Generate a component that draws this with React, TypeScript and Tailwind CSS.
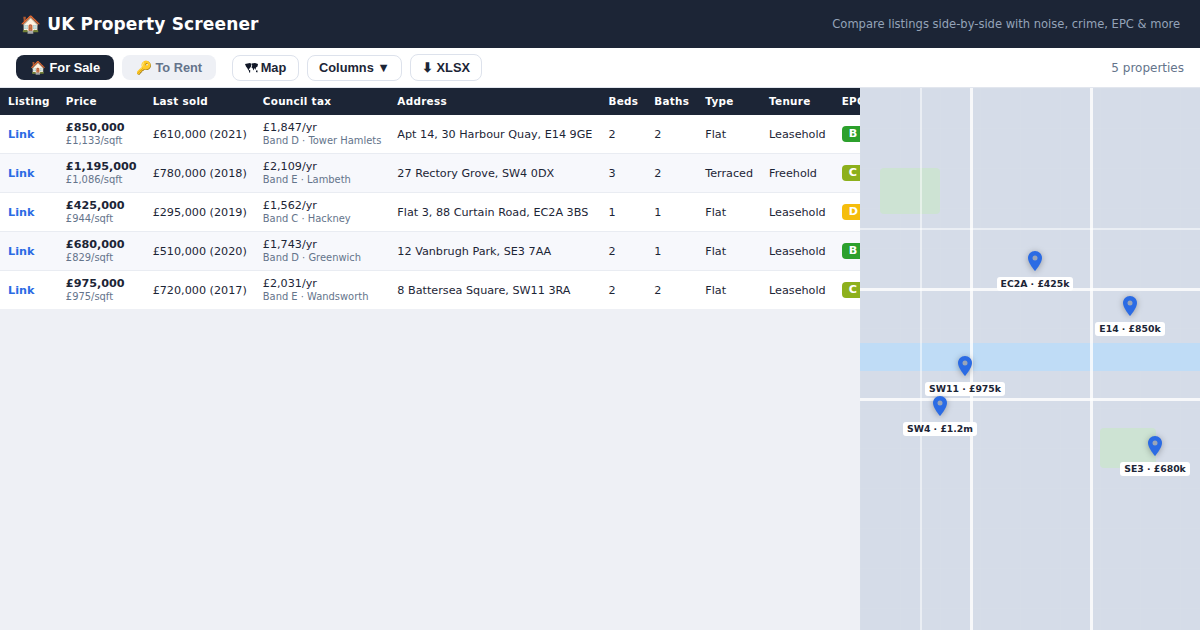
import type { ReactNode } from 'react';

const ROWS = [
  { price: '£850,000', sqft: '£1,133/sqft', sold: '£610,000 (2021)', tax: '£1,847/yr', band: 'Band D · Tower Hamlets', address: 'Apt 14, 30 Harbour Quay, E14 9GE', beds: 2, baths: 2, type: 'Flat', tenure: 'Leasehold', epc: 'B' },
  { price: '£1,195,000', sqft: '£1,086/sqft', sold: '£780,000 (2018)', tax: '£2,109/yr', band: 'Band E · Lambeth', address: '27 Rectory Grove, SW4 0DX', beds: 3, baths: 2, type: 'Terraced', tenure: 'Freehold', epc: 'C' },
  { price: '£425,000', sqft: '£944/sqft', sold: '£295,000 (2019)', tax: '£1,562/yr', band: 'Band C · Hackney', address: 'Flat 3, 88 Curtain Road, EC2A 3BS', beds: 1, baths: 1, type: 'Flat', tenure: 'Leasehold', epc: 'D' },
  { price: '£680,000', sqft: '£829/sqft', sold: '£510,000 (2020)', tax: '£1,743/yr', band: 'Band D · Greenwich', address: '12 Vanbrugh Park, SE3 7AA', beds: 2, baths: 1, type: 'Flat', tenure: 'Leasehold', epc: 'B' },
  { price: '£975,000', sqft: '£975/sqft', sold: '£720,000 (2017)', tax: '£2,031/yr', band: 'Band E · Wandsworth', address: '8 Battersea Square, SW11 3RA', beds: 2, baths: 2, type: 'Flat', tenure: 'Leasehold', epc: 'C' },
];

const EPC_COLOR: Record<string, string> = {
  B: 'bg-[#2ca02c]',
  C: 'bg-[#8db01c]',
  D: 'bg-[#f5bd0c]',
};

const HEADERS = ['Listing', 'Price', 'Last sold', 'Council tax', 'Address', 'Beds', 'Baths', 'Type', 'Tenure', 'EPC'];

// left/top = pin tip position inside the map
const PINS = [
  { label: 'EC2A · £425k', left: 175, top: 183 },
  { label: 'E14 · £850k', left: 270, top: 228 },
  { label: 'SW11 · £975k', left: 105, top: 288 },
  { label: 'SW4 · £1.2m', left: 80, top: 328 },
  { label: 'SE3 · £680k', left: 295, top: 368 },
];

function Pin({ label, left, top }: { label: string; left: number; top: number }) {
  return (
    <div className="absolute flex w-0 flex-col items-center" style={{ left, top: top - 20 }}>
      <svg width="14" height="20" viewBox="0 0 14 20" className="shrink-0 drop-shadow-[0_1px_3px_rgba(0,0,0,0.3)]">
        <path d="M7 0C3.1 0 0 3.1 0 7c0 5 7 13 7 13s7-8 7-13c0-3.9-3.1-7-7-7z" fill="#2b6be4" />
        <circle cx="7" cy="7" r="2.5" fill="#9aa5b8" />
      </svg>
      <div className="mt-[6px] rounded-[3px] bg-white px-1 py-px text-[9.3px] leading-3 font-bold whitespace-nowrap text-[#1c2536]">
        {label}
      </div>
    </div>
  );
}

// world map silhouette, the glyph on the Map button
function MapGlyph() {
  return (
    <svg width="13" height="10" viewBox="0 0 13 10" fill="#111827" className="shrink-0">
      <path d="M0 1 5 0l1.5 1-.5 2.5L5 5l-1 1-.5 2L2.5 5.5 1 3.5z" />
      <path d="M6.5 0.5 10 0l3 1-.5 2.5-1.5 1-.5 2.5-1-2-1 2.5L7.5 5 6.5 4.5 7.2 2.5z" />
      <path d="M4 7l1.3.2L5 10 4 9z" />
      <path d="M11 7.5h1.6L12.4 9.5 11 9z" />
    </svg>
  );
}

function ToolButton({ children, className }: { children: ReactNode; className: string }) {
  return <button className={`rounded-lg text-[12.8px] font-bold ${className}`}>{children}</button>;
}

export default function App() {
  return (
    <div className="flex h-[630px] w-[1200px] flex-col overflow-hidden bg-[#eef0f5] font-['DejaVu_Sans',sans-serif] text-[#1c2536]">
      <header className="flex h-12 shrink-0 items-center justify-between bg-[#1c2536] px-5 pt-px">
        <h1 className="text-[17px] font-bold tracking-[0.15px] text-white">🏠 UK Property Screener</h1>
        <span className="text-[11.52px] text-[#94a3b8]">Compare listings side-by-side with noise, crime, EPC &amp; more</span>
      </header>

      <div className="flex h-10 shrink-0 items-center border-b border-[#e2e6ee] bg-white pr-4 pl-4 font-['Liberation_Sans',sans-serif]">
        <ToolButton className="h-[25px] w-[98px] bg-[#1c2536] text-white">🏠 For Sale</ToolButton>
        <ToolButton className="ml-2 h-[25px] w-[94px] bg-[#eef0f5] text-[#64748b]">🔑 To Rent</ToolButton>
        <ToolButton className="ml-4 flex h-[26px] w-[67px] items-center justify-center gap-[3px] border border-[#dde2ec] bg-white">
          <MapGlyph />
          Map
        </ToolButton>
        <ToolButton className="ml-2 h-[26px] w-[95px] border border-[#dde2ec] bg-white">Columns ▼</ToolButton>
        <ToolButton className="ml-2 h-[27px] w-[72px] border border-[#dde2ec] bg-white">⬇ XLSX</ToolButton>
        <span className="ml-auto font-['DejaVu_Sans',sans-serif] text-xs text-[#64748b]">5 properties</span>
      </div>

      <div className="flex min-h-0 flex-1">
        <div className="w-[860px] shrink-0 overflow-hidden">
          <table className="border-separate border-spacing-0 text-left text-[11.2px] whitespace-nowrap">
            <thead>
              <tr className="h-[27px] bg-[#1c2536] text-[10.4px] tracking-[0.3px] text-white">
                {HEADERS.map((h) => (
                  <th key={h} className="px-2 pt-px font-bold">{h}</th>
                ))}
              </tr>
            </thead>
            <tbody>
              {ROWS.map((r, i) => (
                <tr key={r.address} className={`h-[39px] last:h-[38px] not-last:[&>td]:border-b not-last:[&>td]:border-[#e9ecf2] ${i % 2 ? 'bg-[#f7f8fc]' : 'bg-white'}`}>
                  <td className="px-2 pt-[2px] font-bold text-[#2b6be4]">Link</td>
                  <td className="px-2 leading-[13px]">
                    <div className="font-bold">{r.price}</div>
                    <div className="text-[9.92px] text-[#64748b]">{r.sqft}</div>
                  </td>
                  <td className="px-2 pt-[2px]">{r.sold}</td>
                  <td className="px-2 leading-[13px]">
                    <div>{r.tax}</div>
                    <div className="text-[9.92px] text-[#64748b]">{r.band}</div>
                  </td>
                  <td className="px-2 pt-[2px]">{r.address}</td>
                  <td className="px-2 pt-[2px]">{r.beds}</td>
                  <td className="px-2 pt-[2px]">{r.baths}</td>
                  <td className="px-2 pt-[2px]">{r.type}</td>
                  <td className="px-2 pt-[2px]">{r.tenure}</td>
                  <td className="px-2">
                    <span className={`inline-block rounded-[4px] px-[7px] py-px leading-[14px] font-bold text-white ${EPC_COLOR[r.epc]}`}>{r.epc}</span>
                  </td>
                </tr>
              ))}
            </tbody>
          </table>
        </div>

        <div className="relative flex-1 overflow-hidden bg-[#d5dce8] bg-[linear-gradient(rgba(255,255,255,0.02)_1px,transparent_1px),linear-gradient(90deg,rgba(255,255,255,0.02)_1px,transparent_1px)] bg-[size:40px_40px]">
          <div className="absolute top-[255px] h-7 w-full bg-[#bfdcf6]" />
          <div className="absolute top-[80px] left-5 h-[46px] w-[60px] rounded bg-[#cde3d3]" />
          <div className="absolute top-[340px] left-[240px] h-10 w-14 rounded bg-[#cde3d3]" />
          <div className="absolute top-[140px] h-0.5 w-full bg-white/50" />
          <div className="absolute top-[200px] h-[3px] w-full bg-white/80" />
          <div className="absolute top-[310px] h-[3px] w-full bg-white/80" />
          <div className="absolute left-[60px] h-full w-0.5 bg-white/50" />
          <div className="absolute left-[110px] h-full w-[3px] bg-white/80" />
          <div className="absolute left-[230px] h-full w-[3px] bg-white/80" />
          {PINS.map((p) => (
            <Pin key={p.label} {...p} />
          ))}
        </div>
      </div>
    </div>
  );
}
